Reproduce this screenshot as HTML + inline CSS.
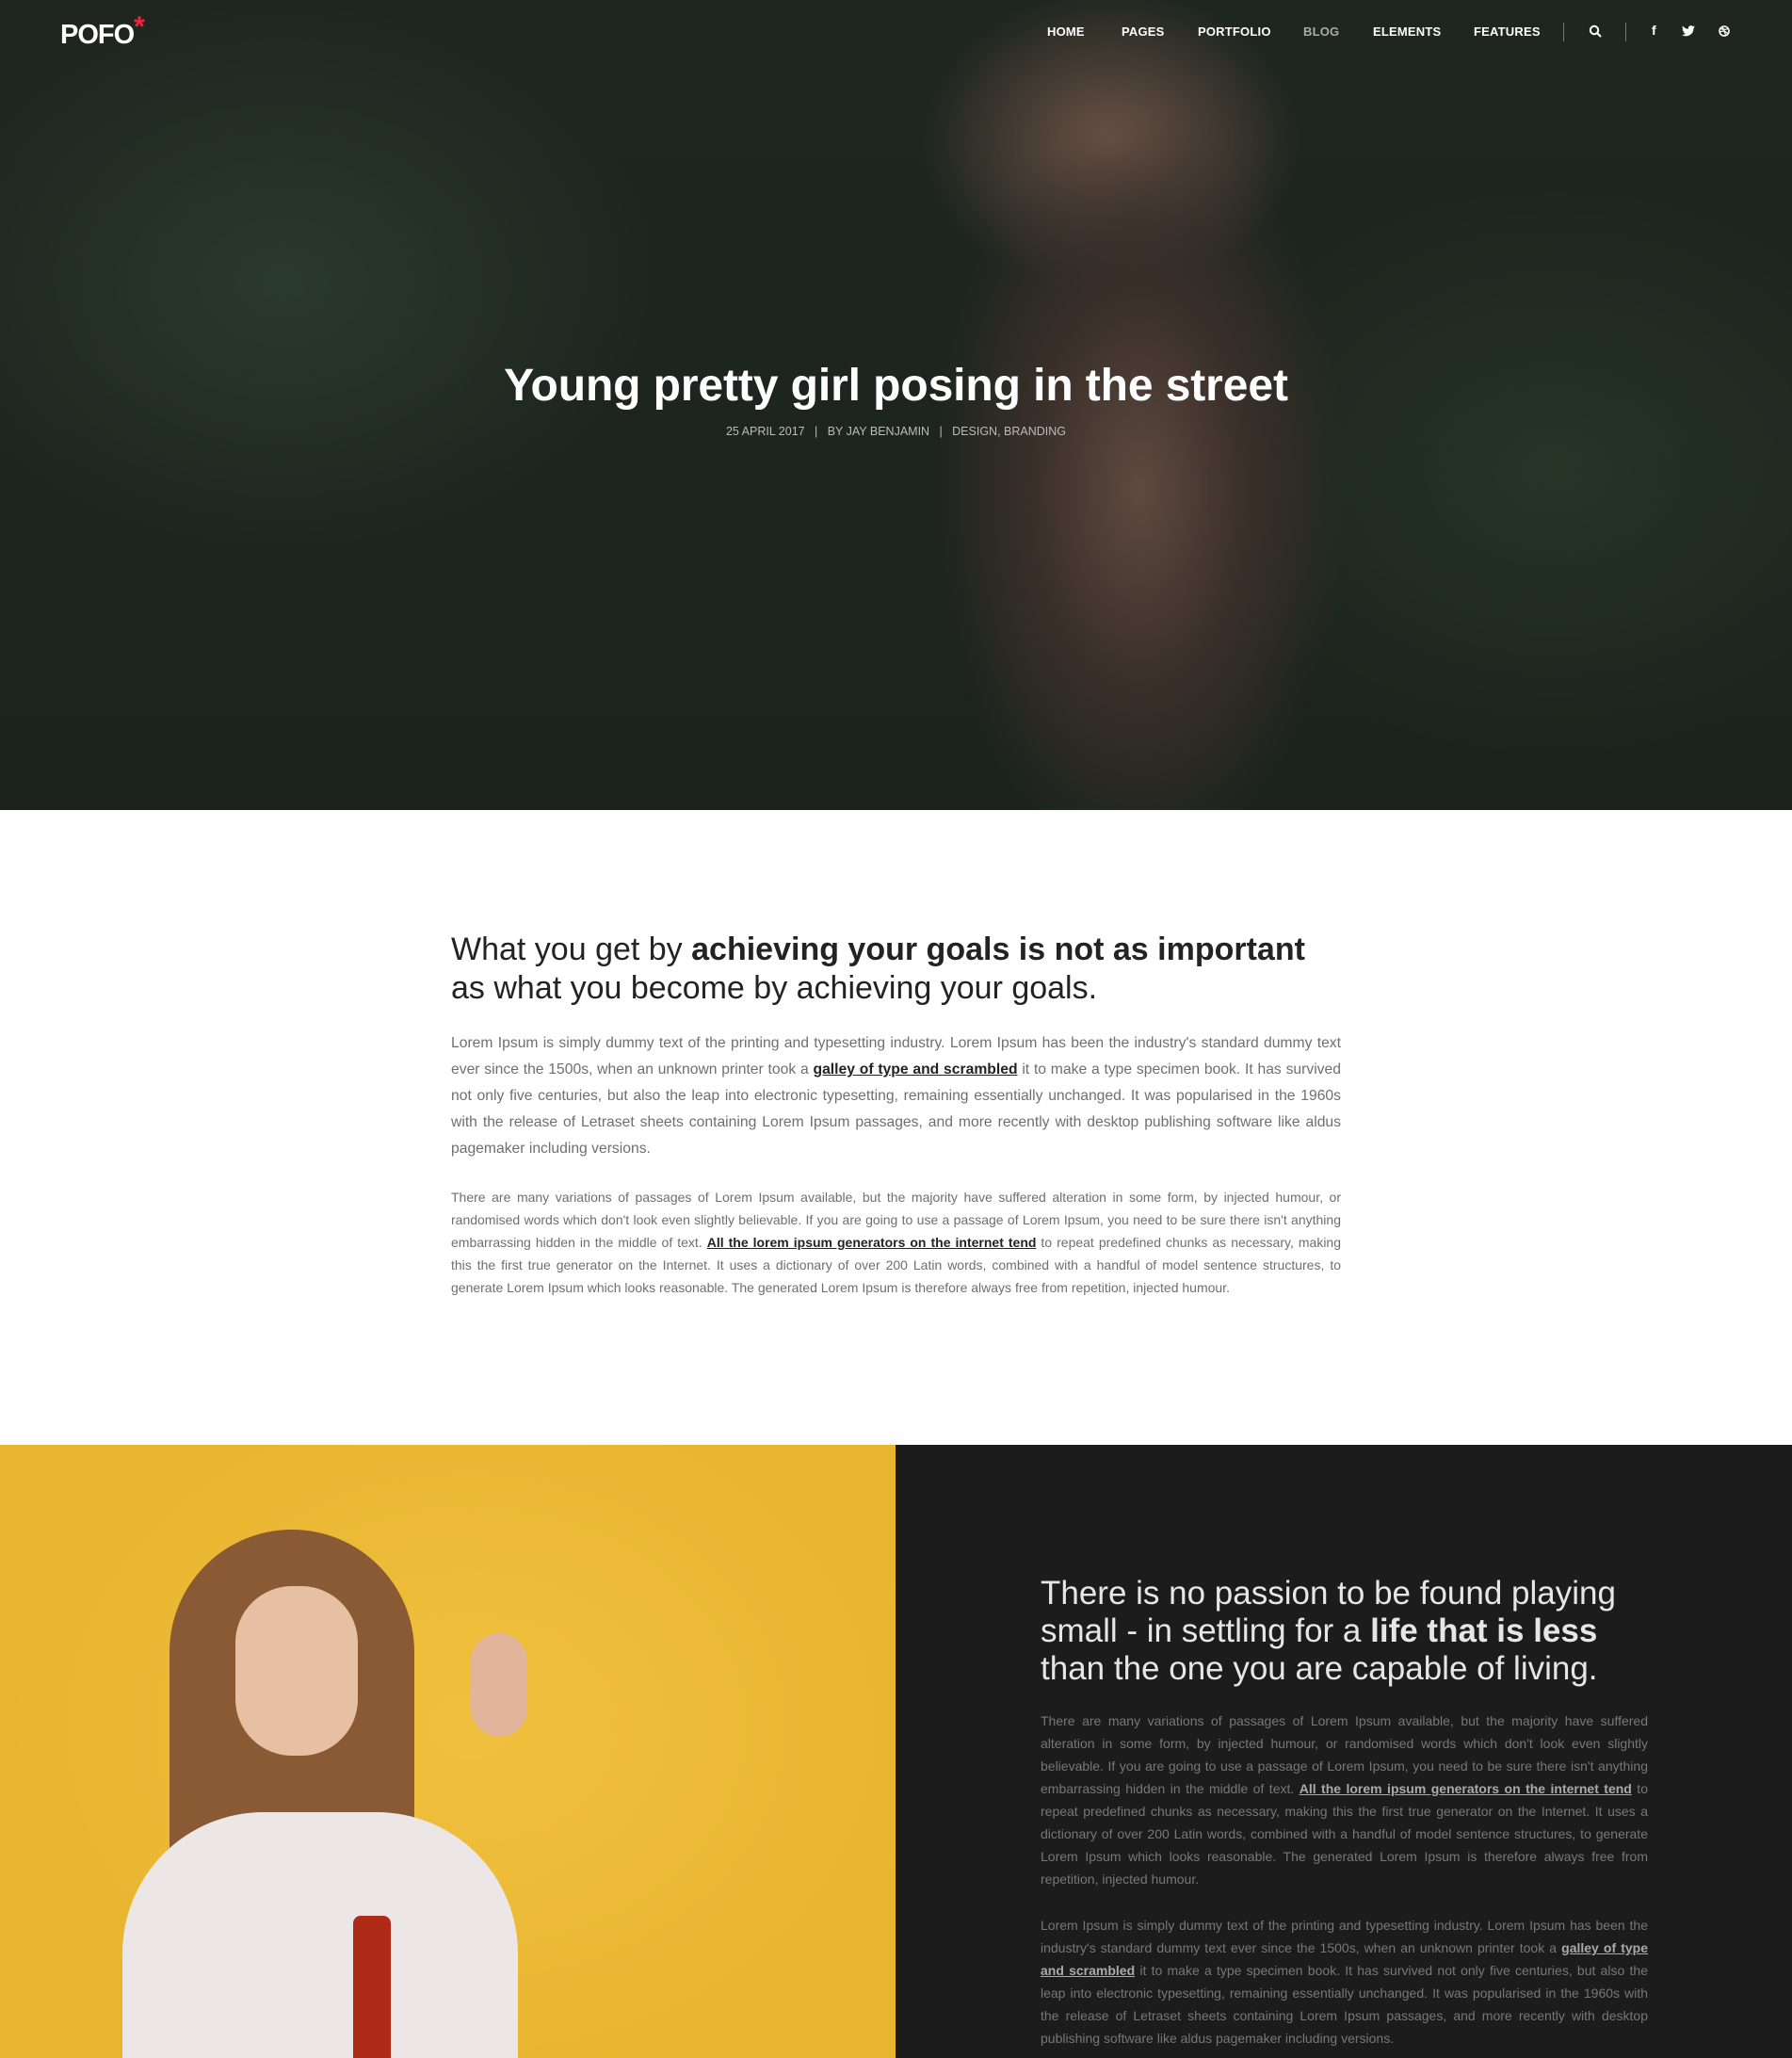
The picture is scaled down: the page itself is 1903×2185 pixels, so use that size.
<!DOCTYPE html>
<html><head><meta charset="utf-8"><style>
*{margin:0;padding:0;box-sizing:border-box}
body{width:1903px;height:2185px;overflow:hidden;font-family:"Liberation Sans",sans-serif;background:#fff;position:relative}
.hero{position:absolute;left:0;top:0;width:1903px;height:860px;overflow:hidden;
background:radial-gradient(ellipse 220px 400px at 1210px 520px,#5e4a40 0%,#3b302a 50%,rgba(30,34,30,0) 100%),
radial-gradient(ellipse 200px 160px at 1180px 150px,#6a5246 0%,rgba(40,40,35,0) 100%),
radial-gradient(ellipse 400px 300px at 300px 300px,#2a3a2c 0%,rgba(0,0,0,0) 100%),
radial-gradient(ellipse 400px 300px at 1650px 500px,#263426 0%,rgba(0,0,0,0) 100%),
linear-gradient(#1f2620,#1c231d)}
.nav{position:absolute;top:26px;font-size:13px;font-weight:bold;color:#fff;letter-spacing:.2px}
.logo{position:absolute;left:64px;top:20px;color:#fff;font-weight:bold;font-size:29px;letter-spacing:-1px}
.logo span{color:#f5213f;font-size:30px;position:relative;top:-8px}
.title{position:absolute;top:382px;left:0;width:1903px;text-align:center;color:#fff;font-size:48px;font-weight:bold;letter-spacing:-.1px}
.meta{position:absolute;top:451px;left:0;width:1903px;text-align:center;color:#bbb;font-size:12.5px}
.h{position:absolute;color:#232323;font-size:34px;line-height:41px}
.p{position:absolute;color:#6f6f6f;text-align:justify}
.p a{color:#232323;text-decoration:underline;font-weight:bold}
.dark .p{color:#777}
.dark .p a{color:#aaa}
</style></head><body>
<div class="hero">
 <div class="logo">POFO<span>*</span></div>
 <div class="nav" style="left:1112px">HOME</div>
 <div class="nav" style="left:1191px">PAGES</div>
 <div class="nav" style="left:1272px">PORTFOLIO</div>
 <div class="nav" style="left:1384px;color:#aaa">BLOG</div>
 <div class="nav" style="left:1458px">ELEMENTS</div>
 <div class="nav" style="left:1565px">FEATURES</div>
 <div style="position:absolute;left:1660px;top:24px;width:1px;height:20px;background:#777"></div>
 <svg style="position:absolute;left:1687px;top:26px" width="14" height="14" viewBox="0 0 14 14"><circle cx="6" cy="6" r="4.2" fill="none" stroke="#fff" stroke-width="2"/><path d="M9 9l4 4" stroke="#fff" stroke-width="2"/></svg>
 <div style="position:absolute;left:1726px;top:24px;width:1px;height:20px;background:#777"></div>
 <div class="nav" style="left:1754px;top:24px;font-size:14px">f</div>
 <svg style="position:absolute;left:1786px;top:27px" width="14" height="12" viewBox="0 0 14 12"><path d="M14 1.5c-.5.2-1 .4-1.6.4.6-.4 1-.9 1.2-1.5-.6.3-1.2.6-1.8.7A2.8 2.8 0 0 0 7 3.7 8 8 0 0 1 1 .6a2.8 2.8 0 0 0 .9 3.8c-.5 0-.9-.2-1.3-.4 0 1.4 1 2.5 2.3 2.8-.4.1-.9.1-1.3 0 .4 1.1 1.4 1.9 2.6 2A5.7 5.7 0 0 1 0 10a8 8 0 0 0 12.4-7.1c.6-.4 1.1-.9 1.6-1.4z" fill="#fff"/></svg>
 <svg style="position:absolute;left:1825px;top:27px" width="12" height="12" viewBox="0 0 12 12"><circle cx="6" cy="6" r="5" fill="none" stroke="#fff" stroke-width="1.6"/><path d="M2 3.5c3 1 6 1 8.5 0M1.5 7c3-1.5 6-1 8.5 2M4 1.5c2 3 3 6 3.5 9.5" fill="none" stroke="#fff" stroke-width="1.2"/></svg>
 <div class="title">Young pretty girl posing in the street</div>
 <div class="meta">25 APRIL 2017 &nbsp;&nbsp;| &nbsp;&nbsp;BY JAY BENJAMIN &nbsp;&nbsp;| &nbsp;&nbsp;DESIGN, BRANDING</div>
</div>

<div class="h" style="left:479px;top:988px;width:1000px">What you get by <b>achieving your goals is not as important</b><br>as what you become by achieving your goals.</div>
<div class="p" style="left:479px;top:1094px;width:945px;font-size:15.7px;line-height:28px">Lorem Ipsum is simply dummy text of the printing and typesetting industry. Lorem Ipsum has been the industry's standard dummy text ever since the 1500s, when an unknown printer took a <a>galley of type and scrambled</a> it to make a type specimen book. It has survived not only five centuries, but also the leap into electronic typesetting, remaining essentially unchanged. It was popularised in the 1960s with the release of Letraset sheets containing Lorem Ipsum passages, and more recently with desktop publishing software like aldus pagemaker including versions.</div>
<div class="p" style="left:479px;top:1259px;width:945px;font-size:14px;line-height:24px">There are many variations of passages of Lorem Ipsum available, but the majority have suffered alteration in some form, by injected humour, or randomised words which don't look even slightly believable. If you are going to use a passage of Lorem Ipsum, you need to be sure there isn't anything embarrassing hidden in the middle of text. <a>All the lorem ipsum generators on the internet tend</a> to repeat predefined chunks as necessary, making this the first true generator on the Internet. It uses a dictionary of over 200 Latin words, combined with a handful of model sentence structures, to generate Lorem Ipsum which looks reasonable. The generated Lorem Ipsum is therefore always free from repetition, injected humour.</div>

<div style="position:absolute;left:0;top:1534px;width:951px;height:651px;overflow:hidden;background:radial-gradient(ellipse 500px 400px at 500px 300px,#f0c03e,#e8b52f)">
 <div style="position:absolute;left:180px;top:90px;width:260px;height:600px;border-radius:130px 130px 0 0;background:#8a5a35"></div>
 <div style="position:absolute;left:250px;top:150px;width:130px;height:180px;border-radius:60px;background:#e7c0a4"></div>
 <div style="position:absolute;left:130px;top:390px;width:420px;height:300px;border-radius:150px 150px 0 0;background:#ece6e6"></div>
 <div style="position:absolute;left:375px;top:500px;width:40px;height:160px;border-radius:8px;background:#b02a18"></div>
 <div style="position:absolute;left:500px;top:200px;width:60px;height:110px;border-radius:30px;background:#e2b59a"></div>
</div>
<div class="dark" style="position:absolute;left:951px;top:1534px;width:952px;height:651px;background:#1c1c1c">
 <div class="h" style="left:154px;top:138px;width:645px;color:#e6e6e6;line-height:40px;font-size:35px">There is no passion to be found playing small - in settling for a <b>life that is less</b> than the one you are capable of living.</div>
 <div class="p" style="left:154px;top:281px;width:645px;font-size:14px;line-height:24px">There are many variations of passages of Lorem Ipsum available, but the majority have suffered alteration in some form, by injected humour, or randomised words which don't look even slightly believable. If you are going to use a passage of Lorem Ipsum, you need to be sure there isn't anything embarrassing hidden in the middle of text. <a>All the lorem ipsum generators on the internet tend</a> to repeat predefined chunks as necessary, making this the first true generator on the Internet. It uses a dictionary of over 200 Latin words, combined with a handful of model sentence structures, to generate Lorem Ipsum which looks reasonable. The generated Lorem Ipsum is therefore always free from repetition, injected humour.</div>
 <div class="p" style="left:154px;top:498px;width:645px;font-size:14px;line-height:24px">Lorem Ipsum is simply dummy text of the printing and typesetting industry. Lorem Ipsum has been the industry's standard dummy text ever since the 1500s, when an unknown printer took a <a>galley of type and scrambled</a> it to make a type specimen book. It has survived not only five centuries, but also the leap into electronic typesetting, remaining essentially unchanged. It was popularised in the 1960s with the release of Letraset sheets containing Lorem Ipsum passages, and more recently with desktop publishing software like aldus pagemaker including versions.</div>
</div>
</body></html>
